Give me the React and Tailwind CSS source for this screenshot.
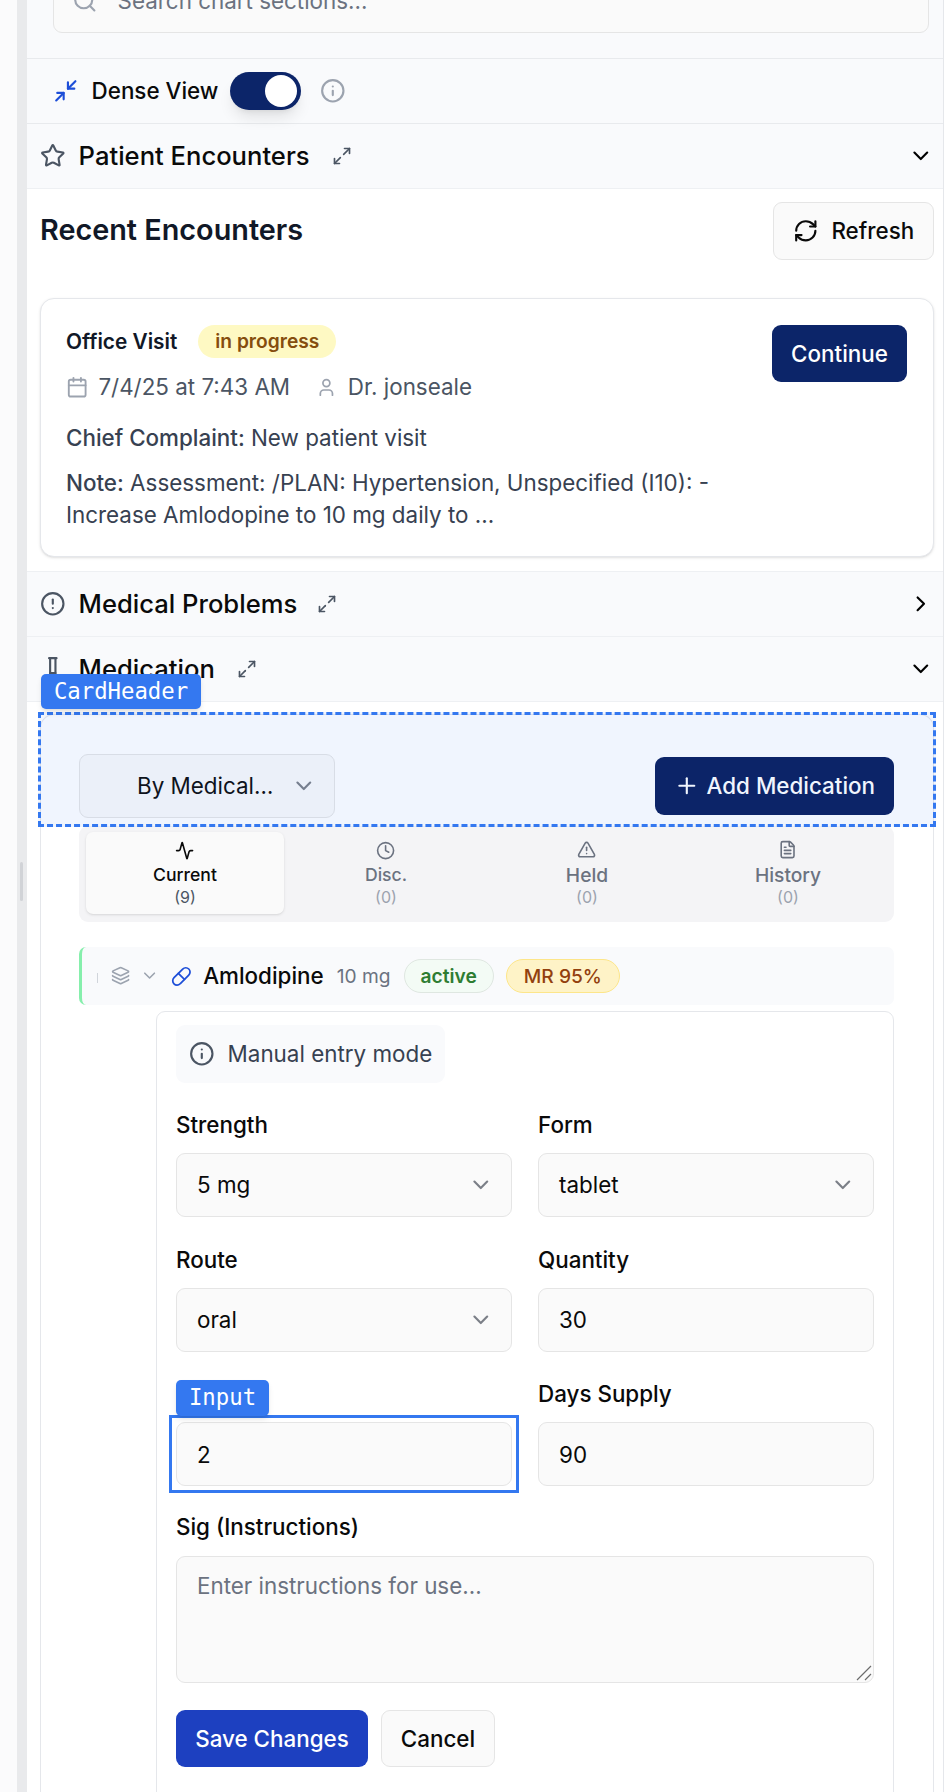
import React from "react";
import {
    Search, Minimize2, Info, Star, Maximize2, ChevronDown, ChevronRight, RefreshCw, Calendar, User,
    CircleAlert, TestTube, Plus, Activity, Clock, TriangleAlert, FileText, Layers, Pill,
} from "lucide-react";

const SectionHeader = ({ icon: Icon, title, open = true, expandGap = "ml-[22px]" }) => (
    <div className="flex h-[65px] items-center border-b border-[#eef0f3] bg-[#f9fafc] pl-[13px] pr-[9px]">
        <Icon className="h-[25.6px] w-[25.6px] text-[#4b5563]" />
        <span className="ml-[13px] text-[25.6px] font-medium text-[#0a0a0a]">{title}</span>
        <Maximize2 className={`${expandGap} h-[20px] w-[20px] text-[#4b5563]`} />
        <div className="ml-auto">
            {open ? <ChevronDown className="h-[25.6px] w-[25.6px] text-black" /> : <ChevronRight className="h-[25.6px] w-[25.6px] text-black" />}
        </div>
    </div>
);

const Tab = ({ icon: Icon, label, count, active, large }) => (
    <div className={`flex flex-1 flex-col items-center rounded-[7px] ${large ? "pt-[8px]" : "pt-[9px]"} ${active ? "bg-[#fafafa] text-[#0a0a0a] shadow-sm" : "text-[#6b7280]"}`}>
        <Icon className="h-[19.2px] w-[19.2px]" />
        <span className={`font-medium leading-[26px] ${large ? "mt-[3px] text-[19.2px]" : "mt-[2px] text-[17.6px]"}`}>{label}</span>
        <span className={`text-[16px] leading-[18px] ${active ? "text-[#4b5563]" : "text-[#9ca3af]"}`}>{count}</span>
    </div>
);

const Field = ({ label, children }) => (
    <div>
        <div className="mb-[10px] h-[36px] text-[22.4px] font-medium leading-[36px] text-[#0a0a0a]">{label}</div>
        {children}
    </div>
);

const SelectBox = ({ value }) => (
    <div className="flex h-[64px] items-center justify-between rounded-[9px] border border-[#e5e5e5] bg-[#fafafa] pl-[20px] pr-[17px] text-[22.4px] text-[#0a0a0a]">
        {value}
        <ChevronDown className="h-[25.6px] w-[25.6px] text-[#7b7f87]" />
    </div>
);

const TextBox = ({ value }) => (
    <input readOnly value={value} className="block h-[64px] w-full rounded-[9px] border border-[#e5e5e5] bg-[#fafafa] px-[20px] text-[22.4px] text-[#0a0a0a] outline-none" />
);

export default function App() {
    return (
        <div className="relative flex h-[1792px] w-[944px] overflow-hidden bg-white font-['Inter',sans-serif]">
            {/* resize gutter */}
            <div className="w-[17px] shrink-0 bg-[#fbfbfc]" />
            <div className="relative w-[10px] shrink-0 bg-[#e9eaec]">
                <div className="absolute left-[3px] top-[862px] h-[39px] w-[3px] rounded-full bg-[#d1d3d7]" />
            </div>

            <div className="min-w-0 flex-1 border-r border-[#e5e7eb]">
                {/* search, scrolled partly out of view */}
                <div className="flex h-[59px] flex-col border-b border-[#e8eaed] bg-[#f9fafc] pl-[26px] pr-[14px]">
                    <div className="-mt-[32px] flex h-[65px] shrink-0 items-center rounded-[9px] border border-[#e5e5e5] bg-[#fafafa] pl-[18px]">
                        <Search className="h-[25.6px] w-[25.6px] text-[#9ca3af]" />
                        <span className="ml-[20px] text-[22.4px] text-[#6b7280]">Search chart sections...</span>
                    </div>
                </div>

                {/* dense view */}
                <div className="flex h-[65px] items-center border-b border-[#e8eaed] bg-[#f9fafc] pl-[26px]">
                    <Minimize2 className="h-[25.6px] w-[25.6px] text-[#1d4ed8]" />
                    <span className="ml-[13px] text-[22.4px] font-medium text-[#0a0a0a]">Dense View</span>
                    <div className="ml-[12px] flex h-[38px] w-[71px] items-center justify-end rounded-full bg-[#0c2569] pr-[4px] shadow-lg">
                        <div className="h-[32px] w-[32px] rounded-full bg-white" />
                    </div>
                    <Info className="ml-[19px] h-[25.6px] w-[25.6px] text-[#9ca3af]" />
                </div>

                <SectionHeader icon={Star} title="Patient Encounters" />

                {/* encounters */}
                <div className="bg-white pb-[14px] pl-[13px] pr-[9px]">
                    <div className="flex items-start justify-between pt-[13px]">
                        <h2 className="mt-[10px] text-[28.8px] font-semibold leading-[36px] text-[#111827]">Recent Encounters</h2>
                        <div className="flex h-[58px] w-[161px] items-center justify-center gap-[13px] rounded-[9px] border border-[#e5e5e5] bg-[#fafafa] text-[22.4px] font-medium text-[#0a0a0a]">
                            <RefreshCw className="h-[25.6px] w-[25.6px]" />
                            Refresh
                        </div>
                    </div>
                    <div className="mt-[38px] flex items-start justify-between rounded-[14px] border border-[#e5e7eb] bg-white pb-[25px] pl-[25px] pr-[26px] pt-[26px] shadow-sm">
                        <div className="w-[660px]">
                            <div className="flex items-center">
                                <span className="text-[20.8px] font-semibold text-[#111827]">Office Visit</span>
                                <span className="ml-[21px] flex h-[33px] items-center rounded-full bg-[#fef9c3] px-[17px] text-[19.2px] font-semibold text-[#854d0e]">in progress</span>
                            </div>
                            <div className="mt-[13px] flex h-[32px] items-center text-[22.4px] text-[#4b5563]">
                                <Calendar className="h-[22.4px] w-[22.4px] text-[#9ca3af]" />
                                <span className="ml-[10px]">7/4/25 at 7:43 AM</span>
                                <User className="ml-[26px] h-[20.8px] w-[20.8px] text-[#9ca3af]" />
                                <span className="ml-[11px]">Dr. jonseale</span>
                            </div>
                            <p className="mt-[19px] text-[22.4px] leading-[32px] text-[#374151]"><span className="font-medium">Chief Complaint:</span> New patient visit</p>
                            <p className="mt-[13px] text-[22.4px] leading-[32px] text-[#374151]"><span className="font-medium">Note:</span> Assessment: /PLAN: Hypertension, Unspecified (I10): - Increase Amlodopine to 10 mg daily to ...</p>
                        </div>
                        <div className="flex h-[57px] w-[135px] items-center justify-center rounded-[9px] bg-[#0c2569] text-[22.4px] font-medium text-white">Continue</div>
                    </div>
                </div>

                <div className="border-t border-[#eef0f3]" />
                <SectionHeader icon={CircleAlert} title="Medical Problems" open={false} expandGap="ml-[20px]" />
                <SectionHeader icon={TestTube} title="Medication" />

                {/* medication card */}
                <div className="ml-[13px] mr-[9px] mt-[12px] rounded-t-[14px] border-x border-t border-[#e5e7eb] bg-white">
                    <div className="flex h-[111px] items-end justify-between pb-[8px] pl-[38px] pr-[39px]">
                        <div className="flex h-[64px] w-[256px] items-center justify-between rounded-[9px] border border-[#e5e5e5] bg-[#fafafa] pl-[57px] pr-[17px] text-[22.4px] text-[#0a0a0a]">
                            By Medical…
                            <ChevronDown className="h-[25.6px] w-[25.6px] text-[#7b7f87]" />
                        </div>
                        <div className="mb-[3px] flex h-[58px] w-[239px] items-center justify-center gap-[7px] rounded-[9px] bg-[#081d5d] text-[22.4px] font-medium text-white">
                            <Plus className="h-[25.6px] w-[25.6px]" />
                            Add Medication
                        </div>
                    </div>

                    <div className="pl-[38px] pr-[39px]">
                        <div className="flex h-[96px] gap-[3px] rounded-[9px] bg-[#f4f4f6] px-[7px] pb-[8px] pt-[6px]">
                            <Tab icon={Activity} label="Current" count="(9)" active />
                            <Tab icon={Clock} label="Disc." count="(0)" />
                            <Tab icon={TriangleAlert} label="Held" count="(0)" large />
                            <Tab icon={FileText} label="History" count="(0)" large />
                        </div>

                        <div className="mt-[25px] flex h-[58px] items-center rounded-[7px] border-l-[3px] border-[#86efac] bg-[#f9fafc] pl-[15px]">
                            <div className="mt-[4px] h-[10px] w-px bg-[#d1d5db]" />
                            <Layers className="ml-[13px] h-[19.2px] w-[19.2px] text-[#9ca3af]" />
                            <ChevronDown className="ml-[10px] h-[19.2px] w-[19.2px] text-[#9ca3af]" />
                            <Pill className="ml-[12px] h-[20.8px] w-[20.8px] text-[#1d4ed8]" />
                            <span className="ml-[11px] text-[22.4px] font-medium text-[#0a0a0a]">Amlodipine</span>
                            <span className="ml-[13px] text-[19.2px] text-[#6b7280]">10 mg</span>
                            <span className="ml-[13px] flex h-[34px] items-center rounded-full border border-[#dfe7e1] bg-[#f3fbf5] px-[16px] text-[19.2px] font-semibold text-[#2e7d32]">active</span>
                            <span className="ml-[12px] flex h-[34px] items-center rounded-full border border-[#fde68a] bg-[#fef3c7] px-[17px] text-[19.2px] font-medium text-[#92400e]">MR 95%</span>
                        </div>

                        <div className="ml-[77px] mt-[6px] rounded-t-[9px] border border-[#e5e7eb] bg-white px-[19px] pt-[13px]">
                            <div className="flex h-[58px] w-[269px] items-center rounded-[9px] bg-[#f9fafc] pl-[13px] text-[22.4px] text-[#374151]">
                                <Info className="h-[25.6px] w-[25.6px] text-[#4b5563]" />
                                <span className="ml-[13px]">Manual entry mode</span>
                            </div>

                            <div className="mt-[24px] grid grid-cols-2 gap-x-[26px] gap-y-[24.5px]">
                                <Field label="Strength"><SelectBox value="5 mg" /></Field>
                                <Field label="Form"><SelectBox value="tablet" /></Field>
                                <Field label="Route"><SelectBox value="oral" /></Field>
                                <Field label="Quantity"><TextBox value="30" /></Field>
                                <Field label=""><TextBox value="2" /></Field>
                                <Field label="Days Supply"><TextBox value="90" /></Field>
                            </div>

                            <div className="mb-[11px] mt-[23px] text-[22.4px] font-medium leading-[36px] text-[#0a0a0a]">Sig (Instructions)</div>
                            <div className="relative">
                                <textarea
                                    readOnly
                                    placeholder="Enter instructions for use..."
                                    className="block h-[127px] w-full resize-none rounded-[9px] border border-[#e5e5e5] bg-[#fafafa] px-[20px] py-[13px] text-[22.4px] leading-[32px] outline-none placeholder:text-[#6b7280]"
                                />
                                <svg className="absolute bottom-[2px] right-[2px] h-[16px] w-[16px]" viewBox="0 0 16 16" fill="none" stroke="#6b6b6b" strokeWidth="1.2">
                                    <path d="M1 15 15 1M9 15l6-6" />
                                </svg>
                            </div>

                            <div className="mt-[27px] flex gap-[13px]">
                                <div className="flex h-[57px] w-[192px] items-center justify-center rounded-[9px] bg-[#1d40c0] text-[22.4px] font-medium text-white">Save Changes</div>
                                <div className="flex h-[57px] w-[114px] items-center justify-center rounded-[9px] border border-[#e5e5e5] bg-[#fafafa] text-[22.4px] font-medium text-[#0a0a0a]">Cancel</div>
                            </div>
                            <div className="h-[60px]" />
                        </div>
                    </div>
                </div>
            </div>

            {/* inspector overlays */}
            <div className="absolute left-[38px] top-[712px] h-[115px] w-[898px] border-[3px] border-dashed border-[#3478f0] bg-[#3b82f6]/8" />
            <div className="absolute left-[41px] top-[674px] flex h-[35px] w-[160px] items-center justify-center rounded-[5px] bg-[#3478f0] font-['DejaVu_Sans_Mono',monospace] text-[22.3px] text-white shadow-md">CardHeader</div>
            <div className="absolute left-[169px] top-[1415px] h-[78px] w-[350px] border-[3px] border-[#3478f0]" />
            <div className="absolute left-[176px] top-[1380px] flex h-[36px] w-[93px] items-center justify-center rounded-[5px] bg-[#3478f0] font-['DejaVu_Sans_Mono',monospace] text-[22.3px] text-white shadow-md">Input</div>
        </div>
    );
}
